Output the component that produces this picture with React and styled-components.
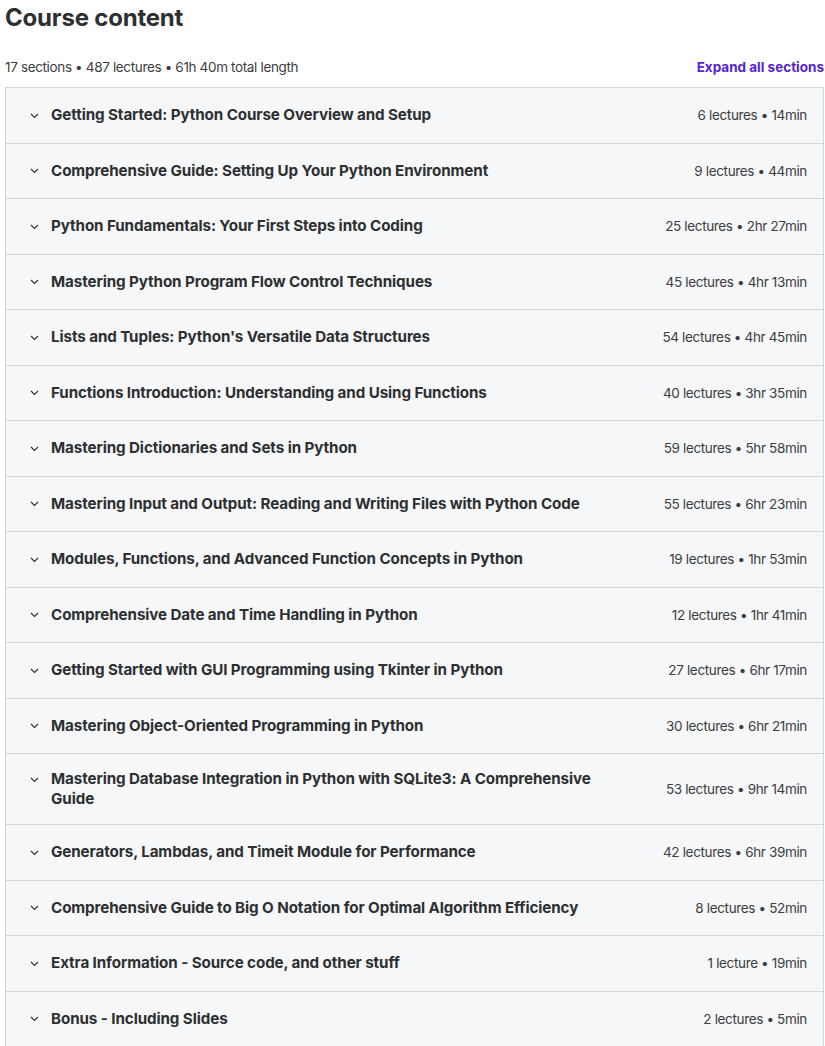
import * as React from 'react';
import styled, { createGlobalStyle } from 'styled-components';

const GlobalStyle = createGlobalStyle`
  body {
    margin: 0;
    background: #fff;
    font-family: Inter, "Noto Sans", sans-serif;
    color: #2d2f31;
  }
`;

const Page = styled.div`
  padding: 0 1px 0 5px;
`;

const Title = styled.h2`
  font-size: 24px;
  font-weight: 700;
  line-height: 36px;
  margin: 0;
  letter-spacing: -0.2px;
`;

const Summary = styled.div`
  display: flex;
  justify-content: space-between;
  align-items: center;
  margin-top: 20px;
  height: 22px;
  margin-bottom: 9px;
  font-size: 13.5px;
`;

const Stats = styled.span`
  letter-spacing: -0.35px;
  color: #3b3d40;
`;

const ExpandAll = styled.button`
  border: 0;
  background: none;
  padding: 0;
  font: inherit;
  font-weight: 700;
  color: #5624d0;
  cursor: pointer;
`;

const Panel = styled.div`
  border: 1px solid #d1d7dc;
  border-bottom: 0;
`;

const Row = styled.div`
  box-sizing: border-box;
  display: flex;
  align-items: center;
  min-height: 55.5px;
  padding: 15px 16px 15px 24px;
  background: #f6f7f9;
  border-bottom: 1px solid #d1d7dc;
`;

const Toggle = styled.div`
  flex: 1;
  display: flex;
  align-items: flex-start;
  gap: 12px;
`;

const Chevron = styled.svg`
  flex: none;
  width: 9px;
  height: 9px;
  margin-top: 5.5px;
`;

const SectionTitle = styled.span`
  flex: 1;
  font-size: 15.2px;
  font-weight: 700;
  line-height: 20px;
  letter-spacing: -0.1px;
`;

const Meta = styled.span`
  flex: none;
  font-size: 13.5px;
  letter-spacing: -0.35px;
  margin-left: 40px;
  color: #3b3d40;
`;

const sections = [
  ['Getting Started: Python Course Overview and Setup', '6 lectures • 14min'],
  ['Comprehensive Guide: Setting Up Your Python Environment', '9 lectures • 44min'],
  ['Python Fundamentals: Your First Steps into Coding', '25 lectures • 2hr 27min'],
  ['Mastering Python Program Flow Control Techniques', '45 lectures • 4hr 13min'],
  ["Lists and Tuples: Python's Versatile Data Structures", '54 lectures • 4hr 45min'],
  ['Functions Introduction: Understanding and Using Functions', '40 lectures • 3hr 35min'],
  ['Mastering Dictionaries and Sets in Python', '59 lectures • 5hr 58min'],
  ['Mastering Input and Output: Reading and Writing Files with Python Code', '55 lectures • 6hr 23min'],
  ['Modules, Functions, and Advanced Function Concepts in Python', '19 lectures • 1hr 53min'],
  ['Comprehensive Date and Time Handling in Python', '12 lectures • 1hr 41min'],
  ['Getting Started with GUI Programming using Tkinter in Python', '27 lectures • 6hr 17min'],
  ['Mastering Object-Oriented Programming in Python', '30 lectures • 6hr 21min'],
  ['Mastering Database Integration in Python with SQLite3: A Comprehensive Guide', '53 lectures • 9hr 14min'],
  ['Generators, Lambdas, and Timeit Module for Performance', '42 lectures • 6hr 39min'],
  ['Comprehensive Guide to Big O Notation for Optimal Algorithm Efficiency', '8 lectures • 52min'],
  ['Extra Information - Source code, and other stuff', '1 lecture • 19min'],
  ['Bonus - Including Slides', '2 lectures • 5min'],
];

const ChevronDown = () => (
  <Chevron viewBox="0 0 9 9" aria-hidden="true">
    <path d="M1 3 L4.5 6.5 L8 3" fill="none" stroke="#2d2f31" strokeWidth="1.1" />
  </Chevron>
);

const App = () => (
  <>
    <GlobalStyle />
    <Page>
      <Title>Course content</Title>
      <Summary>
        <Stats>17 sections • 487 lectures • 61h 40m total length</Stats>
        <ExpandAll>Expand all sections</ExpandAll>
      </Summary>
      <Panel>
        {sections.map(([title, meta]) => (
          <Row key={title}>
            <Toggle>
              <ChevronDown />
              <SectionTitle>{title}</SectionTitle>
            </Toggle>
            <Meta>{meta}</Meta>
          </Row>
        ))}
      </Panel>
    </Page>
  </>
);

export default App;
